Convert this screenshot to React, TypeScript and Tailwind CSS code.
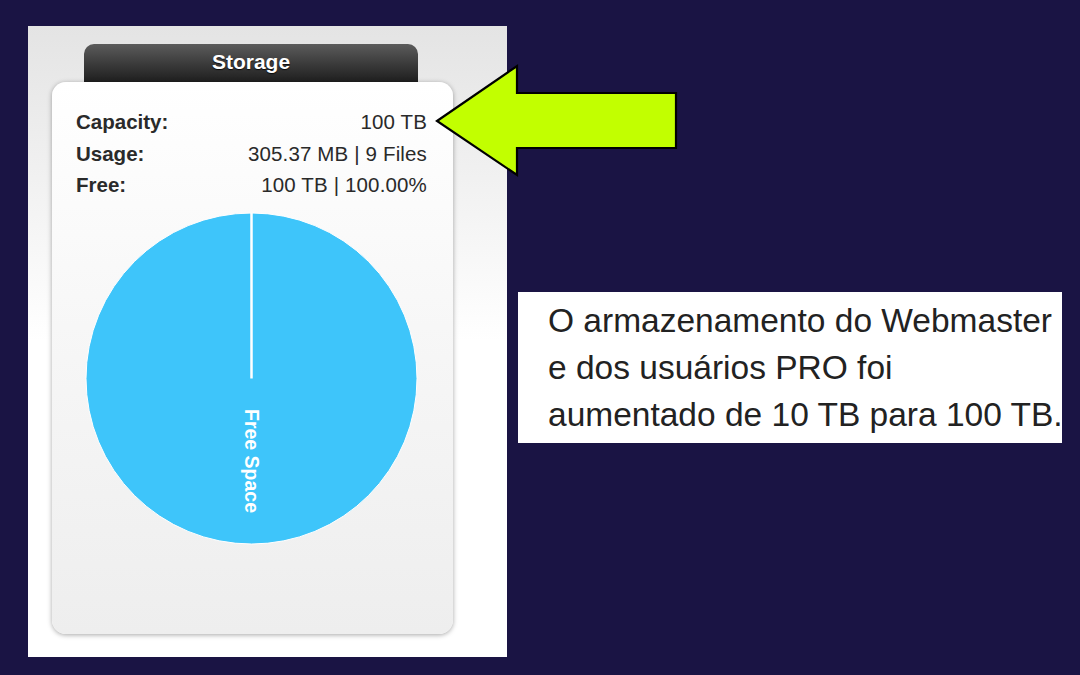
import React from "react";

const font = { fontFamily: '"Liberation Sans", Arial, sans-serif' };

function Row({ label, value }: { label: string; value: string }) {
  return (
    <div className="flex justify-between text-[20.5px] leading-[31.5px] text-[#2a2a2a]">
      <span className="font-bold">{label}</span>
      <span className="tracking-[0.15px]">{value}</span>
    </div>
  );
}

function Pie() {
  return (
    <svg width="333" height="333" viewBox="0 0 333 333" className="block">
      <circle cx="166.5" cy="166.5" r="165.5" fill="#3ec5fa" stroke="#ffffff" strokeWidth="1" />
      <line x1="166.5" y1="1" x2="166.5" y2="166.5" stroke="#ffffff" strokeWidth="2.5" />
      <text
        x="0"
        y="0"
        transform="translate(160 249) rotate(90)"
        textAnchor="middle"
        fill="#ffffff"
        fontSize="19.5"
        fontWeight="bold"
        fontFamily='"Liberation Sans", Arial, sans-serif'
      >
        Free Space
      </text>
    </svg>
  );
}

function Arrow() {
  return (
    <svg
      className="absolute left-[430px] top-[60px]"
      width="256"
      height="124"
      viewBox="430 60 256 124"
    >
      <polygon
        points="437,121 517,66 517,93 676,93 676,148 517,148 517,175"
        fill="#c2ff00"
        stroke="#000000"
        strokeWidth="2.2"
        strokeLinejoin="miter"
      />
    </svg>
  );
}

export default function App() {
  return (
    <div
      className="relative flex w-[1080px] h-[675px] bg-[#1a1444] overflow-hidden"
      style={font}
    >
      {/* storage widget */}
      <div className="ml-[28px] mt-[26px] w-[479px] h-[631px] bg-gradient-to-b from-[#e4e4e4] via-[#ffffff] via-50% to-[#ffffff] flex flex-col">
        <div className="ml-[56px] mt-[18px] w-[334px] h-[40px] rounded-t-[10px] bg-gradient-to-b from-[#5c5c5c] to-[#1c1c1c] flex items-start justify-center pt-[5px]">
          <span className="text-white font-bold text-[21px] leading-[26px] [text-shadow:0_1px_1px_rgba(0,0,0,0.8)]">
            Storage
          </span>
        </div>
        <div className="relative -mt-[2px] ml-[24px] w-[401px] h-[552px] rounded-[14px] bg-gradient-to-b from-[#ffffff] via-[#f6f6f6] to-[#eeeeee] shadow-[0_1px_5px_rgba(0,0,0,0.35)] pt-[24px] pr-[26px] pl-[24px]">
          <Row label="Capacity:" value="100 TB" />
          <Row label="Usage:" value="305.37 MB | 9 Files" />
          <Row label="Free:" value="100 TB | 100.00%" />
          <div className="mt-[11px] flex justify-center -ml-[1px]">
            <Pie />
          </div>
        </div>
      </div>

      {/* note box */}
      <div className="ml-[11px] mt-[292px] w-[544px] h-[151px] bg-white pl-[30px] pt-[5px]">
        <p className="text-[33.5px] leading-[47px] text-[#222222] whitespace-nowrap">
          O armazenamento do Webmaster
          <br />
          e dos usuários PRO foi
          <br />
          aumentado de 10 TB para 100 TB.
        </p>
      </div>

      <Arrow />
    </div>
  );
}
